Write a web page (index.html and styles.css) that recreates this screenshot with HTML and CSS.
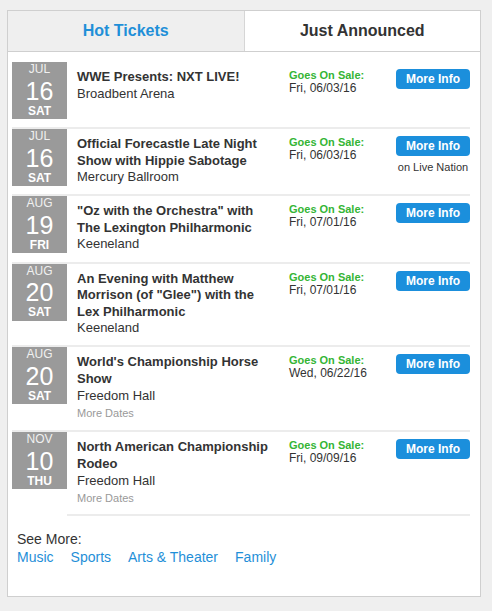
FILE: index.html
```html
<!DOCTYPE html>
<html>
<head>
<meta charset="utf-8">
<link rel="stylesheet" href="styles.css">
</head>
<body>
<div class="panel">
  <div class="tabs">
    <div class="tab tab-active">Hot Tickets</div>
    <div class="tab tab-other">Just Announced</div>
  </div>
  <div class="list">
    <div class="row">
      <div class="date"><div class="mon">JUL</div><div class="day">16</div><div class="wd">SAT</div></div>
      <div class="body">
        <div class="info"><div class="title">WWE Presents: NXT LIVE!</div><div class="venue">Broadbent Arena</div></div>
        <div class="sale"><div class="sale-label">Goes On Sale:</div><div class="sale-date">Fri, 06/03/16</div></div>
        <div class="action"><a class="btn">More Info</a></div>
      </div>
    </div>
    <div class="row">
      <div class="date"><div class="mon">JUL</div><div class="day">16</div><div class="wd">SAT</div></div>
      <div class="body">
        <div class="info"><div class="title">Official Forecastle Late Night Show with Hippie Sabotage</div><div class="venue">Mercury Ballroom</div></div>
        <div class="sale"><div class="sale-label">Goes On Sale:</div><div class="sale-date">Fri, 06/03/16</div></div>
        <div class="action"><a class="btn">More Info</a><div class="via">on Live Nation</div></div>
      </div>
    </div>
    <div class="row">
      <div class="date"><div class="mon">AUG</div><div class="day">19</div><div class="wd">FRI</div></div>
      <div class="body">
        <div class="info"><div class="title">"Oz with the Orchestra" with The Lexington Philharmonic</div><div class="venue">Keeneland</div></div>
        <div class="sale"><div class="sale-label">Goes On Sale:</div><div class="sale-date">Fri, 07/01/16</div></div>
        <div class="action"><a class="btn">More Info</a></div>
      </div>
    </div>
    <div class="row">
      <div class="date"><div class="mon">AUG</div><div class="day">20</div><div class="wd">SAT</div></div>
      <div class="body">
        <div class="info"><div class="title">An Evening with Matthew Morrison (of "Glee") with the Lex Philharmonic</div><div class="venue">Keeneland</div></div>
        <div class="sale"><div class="sale-label">Goes On Sale:</div><div class="sale-date">Fri, 07/01/16</div></div>
        <div class="action"><a class="btn">More Info</a></div>
      </div>
    </div>
    <div class="row">
      <div class="date"><div class="mon">AUG</div><div class="day">20</div><div class="wd">SAT</div></div>
      <div class="body">
        <div class="info"><div class="title">World's Championship Horse Show</div><div class="venue">Freedom Hall</div><div class="more">More Dates</div></div>
        <div class="sale"><div class="sale-label">Goes On Sale:</div><div class="sale-date">Wed, 06/22/16</div></div>
        <div class="action"><a class="btn">More Info</a></div>
      </div>
    </div>
    <div class="row row-last">
      <div class="date"><div class="mon">NOV</div><div class="day">10</div><div class="wd">THU</div></div>
      <div class="body">
        <div class="info"><div class="title">North American Championship Rodeo</div><div class="venue">Freedom Hall</div><div class="more">More Dates</div></div>
        <div class="sale"><div class="sale-label">Goes On Sale:</div><div class="sale-date">Fri, 09/09/16</div></div>
        <div class="action"><a class="btn">More Info</a></div>
      </div>
    </div>
  </div>
  <div class="see-more">
    <div class="see-label">See More:</div>
    <div class="links"><a>Music</a><a>Sports</a><a>Arts &amp; Theater</a><a>Family</a></div>
  </div>
</div>
</body>
</html>
```

FILE: styles.css
```css
html, body {
  margin: 0;
  padding: 0;
  background: #efefef;
  font-family: "Liberation Sans", Arial, Helvetica, sans-serif;
  color: #333;
}
.panel {
  box-sizing: border-box;
  width: 474px;
  margin: 10px 0 0 7px;
  height: 587px;
  background: #fff;
  border: 1px solid #cfcfcf;
}
.tabs {
  display: flex;
  height: 40px;
  border-bottom: 1px solid #cfcfcf;
}
.tab {
  flex: 1;
  display: flex;
  align-items: center;
  justify-content: center;
  font-size: 16px;
  font-weight: bold;
}
.tab-active {
  background: #efefef;
  color: #1f8fd8;
}
.tab-other {
  background: #fff;
  color: #333;
  border-left: 1px solid #d6d6d6;
}
.list {
  padding: 10px 10px 0 4px;
}
.row {
  display: flex;
  align-items: flex-start;
  border-bottom: 2px solid #ececec;
}
.row-last {
  border-bottom: none;
}
.row-last .body {
  border-bottom: 2px solid #ececec;
  padding-bottom: 7px;
}
.date {
  box-sizing: border-box;
  width: 55px;
  height: 57px;
  margin-bottom: 8px;
  padding-top: 1px;
  background: #9a9a9a;
  color: #fff;
  text-align: center;
  flex-shrink: 0;
  overflow: hidden;
}
.mon {
  font-size: 12px;
  line-height: 13.5px;
  color: #f0f0f0;
}
.day {
  font-size: 25px;
  line-height: 28px;
}
.wd {
  font-size: 12px;
  line-height: 13.5px;
  font-weight: bold;
}
.body {
  flex: 1;
  display: flex;
  align-items: flex-start;
  padding: 7px 0 8.5px 10px;
}
.info {
  width: 198px;
}
.title {
  font-size: 13px;
  font-weight: bold;
  line-height: 16.6px;
  color: #333;
}
.venue {
  font-size: 13px;
  line-height: 16.6px;
  color: #333;
}
.more {
  font-size: 11px;
  line-height: 16.6px;
  margin-top: 1px;
  color: #999;
}
.sale {
  margin-left: 14px;
  width: 107px;
}
.sale-label {
  font-size: 11px;
  font-weight: bold;
  line-height: 13px;
  color: #35b535;
}
.sale-date {
  font-size: 12px;
  line-height: 13.5px;
  color: #333;
}
.action {
  width: 74px;
  text-align: center;
}
.btn {
  display: block;
  height: 20px;
  line-height: 20px;
  border-radius: 4px;
  background: #1b8fdc;
  color: #fff;
  font-size: 12px;
  font-weight: bold;
  text-align: center;
}
.via {
  margin-top: 4px;
  font-size: 11px;
  line-height: 14px;
  color: #333;
}
.see-more {
  padding: 14px 0 0 9px;
}
.see-label {
  font-size: 14px;
  line-height: 18px;
  color: #333;
}
.links {
  display: flex;
  gap: 17px;
  font-size: 14px;
  line-height: 18px;
}
.links a {
  color: #1f8fd8;
}
```
